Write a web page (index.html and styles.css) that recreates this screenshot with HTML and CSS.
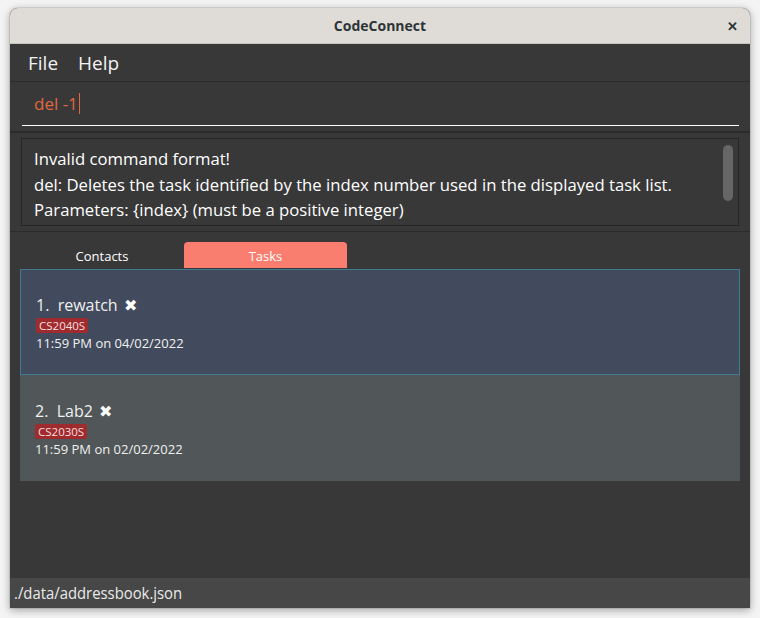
FILE: index.html
```html
<!DOCTYPE html>
<html lang="en">
<head>
<meta charset="utf-8">
<title>CodeConnect</title>
<link rel="stylesheet" href="styles.css">
</head>
<body>
<div class="window">
  <div class="titlebar">
    <span class="title">CodeConnect</span>
    <span class="close">&#x2715;</span>
  </div>
  <div class="menubar">
    <span class="menu">File</span>
    <span class="menu">Help</span>
  </div>
  <div class="command">
    <div class="input"><span class="cmd-text">del -1</span><span class="caret"></span></div>
  </div>
  <div class="result-pane">
    <div class="result">
      <div class="result-text">
        <div>Invalid command format!</div>
        <div>del: Deletes the task identified by the index number used in the displayed task list.</div>
        <div>Parameters: {index} (must be a positive integer)</div>
      </div>
      <div class="scroll-thumb"></div>
    </div>
  </div>
  <div class="main">
    <div class="tabs">
      <div class="tab">Contacts</div>
      <div class="tab active">Tasks</div>
    </div>
    <div class="list">
      <div class="card selected">
        <div class="card-title">1.&nbsp; rewatch <span class="x">&#x2716;</span></div>
        <div class="tags"><span class="tag">CS2040S</span></div>
        <div class="date">11:59 PM on 04/02/2022</div>
      </div>
      <div class="card">
        <div class="card-title">2.&nbsp; Lab2 <span class="x">&#x2716;</span></div>
        <div class="tags"><span class="tag">CS2030S</span></div>
        <div class="date">11:59 PM on 02/02/2022</div>
      </div>
    </div>
  </div>
  <div class="status"><span class="status-text">./data/addressbook.json</span></div>
</div>
</body>
</html>
```
FILE: styles.css
```css
html, body {
  margin: 0;
  padding: 0;
}
body {
  background: #f4f4f4;
  font-family: "Open Sans", "Noto Sans", sans-serif;
  padding: 8px 10px 0 10px;
  height: 618px;
  box-sizing: border-box;
  overflow: hidden;
}
.window {
  width: 740px;
  height: 600px;
  display: flex;
  flex-direction: column;
  background: #383838;
  border-radius: 8px 8px 0 0;
  overflow: hidden;
  box-shadow: 0 2px 9px rgba(0, 0, 0, 0.35), 0 0 0 1px rgba(0, 0, 0, 0.08);
}
.titlebar {
  height: 36px;
  flex: none;
  background: #dfdcd8;
  border-bottom: 1px solid #c8c4bf;
  box-sizing: border-box;
  display: flex;
  align-items: center;
  justify-content: center;
  position: relative;
}
.title {
  font-weight: 700;
  font-size: 14px;
  color: #2e3436;
}
.close {
  position: absolute;
  right: 12px;
  top: 9px;
  font-size: 13px;
  font-weight: 700;
  color: #2e3436;
}
.menubar {
  height: 38px;
  flex: none;
  display: flex;
  align-items: center;
  gap: 20px;
  padding-left: 18px;
  box-sizing: border-box;
  border-bottom: 1px solid #2b2b2b;
}
.menu {
  color: #f2f2f2;
  font-size: 19px;
}
.command {
  height: 51px;
  flex: none;
  padding: 0 11px 0 12px;
  box-sizing: border-box;
  border-bottom: 2px solid #2b2b2b;
}
.input {
  height: 44px;
  border-bottom: 1px solid #ffffff;
  display: flex;
  align-items: center;
  padding-left: 12px;
  box-sizing: border-box;
}
.cmd-text {
  color: #e0673f;
  font-size: 17px;
}
.caret {
  display: inline-block;
  width: 1px;
  height: 21px;
  background: #e0673f;
  margin-left: 1px;
}
.result-pane {
  height: 99px;
  flex: none;
  padding: 5px 11px 0 11px;
  box-sizing: border-box;
  border-bottom: 1px solid #2b2b2b;
}
.result {
  height: 88px;
  border: 1px solid #252525;
  box-sizing: border-box;
  position: relative;
  padding: 7px 12px;
}
.result-text {
  color: #ffffff;
  font-size: 16.7px;
  line-height: 25.5px;
  white-space: nowrap;
}
.scroll-thumb {
  position: absolute;
  right: 5px;
  top: 6px;
  width: 10px;
  height: 56px;
  border-radius: 5px;
  background: #666666;
}
.main {
  flex: 1;
  padding: 10px 10px 0 10px;
  display: flex;
  flex-direction: column;
}
.tabs {
  display: flex;
  height: 26px;
  flex: none;
}
.tab {
  width: 164px;
  display: flex;
  align-items: center;
  justify-content: center;
  color: #ffffff;
  font-size: 13px;
  padding-top: 2px;
  box-sizing: border-box;
  border-radius: 4px 4px 0 0;
}
.tab.active {
  width: 163px;
  background: #fa7e6f;
}
.list {
  display: flex;
  flex-direction: column;
}
.card {
  height: 106px;
  box-sizing: border-box;
  background: #515658;
  padding: 25px 15px 0 15px;
  color: #ffffff;
}
.card.selected {
  background: #424b5d;
  border: 1px solid #3f7c90;
  padding: 24px 15px 0 15px;
  margin-top: 1px;
}
.card-title {
  font-size: 16px;
  line-height: 23px;
  color: #f0f0f0;
}
.x {
  font-size: 16px;
  color: #ffffff;
  margin-left: 2px;
}
.tags {
  display: flex;
  height: 17px;
  align-items: center;
}
.tag {
  background: #a02b2f;
  color: #f3dede;
  font-size: 11.5px;
  line-height: 15px;
  padding: 0 3px;
  border-radius: 2px;
}
.date {
  font-size: 13px;
  line-height: 19px;
  color: #f0f0f0;
}
.status {
  height: 30px;
  flex: none;
  background: #474747;
  display: flex;
  align-items: center;
  padding-left: 4px;
}
.status-text {
  color: #eaeaea;
  font-size: 16px;
  display: inline-block;
  transform: scaleX(0.928);
  transform-origin: left center;
}
```
